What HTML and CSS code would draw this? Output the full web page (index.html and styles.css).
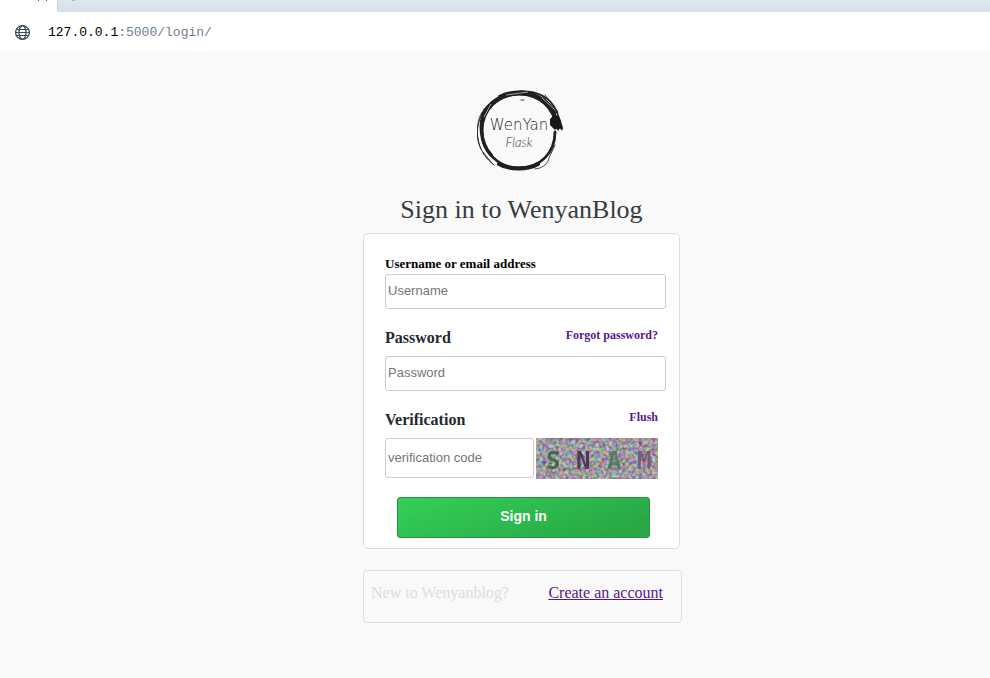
FILE: index.html
```html
<!DOCTYPE html>
<html lang="en">
<head>
<meta charset="utf-8">
<title>Sign in to WenyanBlog</title>
<link rel="stylesheet" href="styles.css">
</head>
<body>
<header class="browser">
  <div class="tabs">
    <div class="tab">
      <svg class="tab-marks" viewBox="0 0 57 12" aria-hidden="true"><path d="M38.500 0v1M46.500 0v1" stroke="#555"/></svg>
    </div>
    <div class="tab-rest">
      <svg class="tab-marks" viewBox="0 0 57 12" aria-hidden="true"><path d="M14 0h3" stroke="#78818c"/></svg>
    </div>
  </div>
  <div class="address">
    <svg class="globe" viewBox="0 0 16 16" aria-hidden="true">
      <g fill="none" stroke="#414b54" stroke-width="1.300">
        <circle cx="7.500" cy="7.500" r="6.900"/>
        <ellipse cx="7.500" cy="7.500" rx="3.500" ry="6.900"/>
        <path d="M1.500 4.500h12M0.500 7.500h14M1.500 10.500h12" stroke-width="1"/>
      </g>
    </svg>
    <span class="url">127.0.0.1<span class="url-path">:5000/login/</span></span>
  </div>
</header>
<main class="page">
  <div class="column">
    <svg class="logo" viewBox="478 90 88 82" role="img" aria-label="WenYan Flask">
      <g fill="none" stroke="#202020" stroke-linecap="round">
        <path d="M557 128C556 108 540 94 520 94C499 94 483 110 483 131C483 152 500 168 520 168C541 168 556 153 556 132" stroke-width="2.800"/>
        <path d="M484 116C489 103 505 93 520 93C533 92 547 99 555 113" stroke-width="4.500"/>
        <path d="M500 96C514 89 533 90 544 96C555 102 561 115 561 128" stroke-width="1.800"/>
        <path d="M486 110C480 123 481 143 492 155" stroke-width="3.500"/>
        <path d="M495 100C482 109 476 127 479 140C481 150 487 159 495 165" stroke-width="1"/>
        <path d="M483 112C477 121 477 139 482 149M484 152L493 163" stroke-width="0.800"/>
        <path d="M500 164C510 170 529 170 539 164" stroke-width="4"/>
        <path d="M536 169C545 168 549 163 550 158L556 145" stroke-width="0.800"/>
        <path d="M522 100h3M541 94l14 14M546 95l13 17" stroke-width="0.900"/>
      </g>
      <path d="M551 119L556 114L561 118L564 128L563 131L561 128L559 131L557 127L556 130L551 125Z" fill="#181818"/>
      <path d="M543 98L555 109M507 95L529 92M492 104L485 117" fill="none" stroke="#f9f9f9" stroke-width="0.600"/>
      <text class="logo-name" x="520" y="130" text-anchor="middle">WenYan</text>
      <text class="logo-sub" x="520" y="147" text-anchor="middle">Flask</text>
    </svg>
    <h1>Sign in to WenyanBlog</h1>
    <form class="card">
      <label class="small-label" for="username">Username or email address</label>
      <input class="field" id="username" type="text" placeholder="Username">
      <div class="row">
        <label for="password">Password</label>
        <a href="#forgot">Forgot password?</a>
      </div>
      <input class="field" id="password" type="password" placeholder="Password">
      <div class="row">
        <label for="code">Verification</label>
        <a href="#flush">Flush</a>
      </div>
      <div class="verify">
        <input class="field code" id="code" type="text" placeholder="verification code">
        <svg class="captcha" viewBox="0 0 122 41" role="img" aria-label="Verification picture">
          <defs>
            <filter id="noise" x="0" y="0" width="100%" height="100%" color-interpolation-filters="sRGB">
              <feTurbulence type="fractalNoise" baseFrequency="0.300" numOctaves="2" seed="8"/>
              <feColorMatrix values="0.950 0 0 0 0.140  0 0.950 0 0 0.120  0 0 0.950 0 0.150  0 0 0 0 1"/>
              <feGaussianBlur stdDeviation="0.600" edgeMode="duplicate"/>
            </filter>
          </defs>
          <rect width="122" height="41" fill="#999" filter="url(#noise)"/>
          <g class="captcha-text">
            <text x="10" y="31" fill="#2c6638">S</text>
            <text x="40" y="31" fill="#3c2447">N</text>
            <text x="71" y="31" fill="#3d7552">A</text>
            <text x="101" y="31" fill="#754c71">M</text>
          </g>
        </svg>
      </div>
      <button type="submit">Sign in</button>
    </form>
    <div class="signup">
      <span>New to Wenyanblog?</span>
      <a href="#create">Create an account</a>
    </div>
  </div>
</main>
</body>
</html>
```
FILE: styles.css
```css
* { box-sizing: border-box; }
body {
  margin: 0;
  background: #f9f9f9;
  color: #24292e;
  font-family: "Liberation Serif", serif;
  font-size: 16px;
}
.browser { background: #fff; }
.tabs { display: flex; height: 12px; }
.tab { width: 57px; }
.tab-rest {
  flex: 1;
  background: linear-gradient(#dfe6ee, #d9e0e9);
  border-left: 1px solid #ccd4de;
  border-bottom-left-radius: 2px;
}
.tab-marks { display: block; width: 57px; height: 12px; }
.address {
  display: flex;
  align-items: center;
  gap: 17px;
  height: 39px;
  padding: 2px 15px 0;
}
.globe { width: 16px; height: 16px; }
.url {
  color: #000;
  font: 13px/18px "Liberation Mono", monospace;
}
.url-path { color: #708090; }
.page { padding: 39px 0 40px 55px; }
.column { width: 100%; max-width: 319px; margin: 0 auto; }
.logo { display: block; width: 88px; height: 82px; margin: 0 0 0 114px; }
.logo-name { font: 200 15px "DejaVu Sans", sans-serif; fill: #282828; }
.logo-sub { font: italic 300 13px Lato, sans-serif; fill: #4a3c3e; }
h1 {
  margin: 22px 0 8px;
  padding-right: 2px;
  color: #363c42;
  font-size: 26px;
  font-weight: 400;
  line-height: 31px;
  text-align: center;
}
.card {
  margin-right: 2px;
  padding: 22px 13px 10px 21px;
  background: #fff;
  border: 1px solid #d8dee2;
  border-radius: 5px;
}
.small-label {
  display: block;
  height: 18px;
  color: #000;
  font-size: 13px;
  font-weight: 700;
  line-height: 16px;
}
.field {
  display: block;
  width: 100%;
  height: 35px;
  padding: 0 2px 2px;
  background: #fff;
  border: 1px solid #ccc;
  border-radius: 3px;
  font: 13px "Liberation Sans", sans-serif;
}
.field::placeholder { color: #757575; }
.row {
  display: flex;
  justify-content: space-between;
  height: 47px;
  padding: 18px 8px 0 0;
  font-weight: 700;
}
.row label { line-height: 22px; }
.row a {
  color: #551a8b;
  font-size: 12px;
  line-height: 16px;
  text-decoration: none;
}
.verify { display: flex; gap: 2px; padding-right: 8px; }
.code { flex: 1; min-width: 0; height: 40px; }
.captcha { display: block; width: 122px; height: 41px; }
.captcha-text { font: 600 24px "DejaVu Sans Mono", monospace; opacity: 0.8; }
button {
  display: block;
  width: calc(100% - 28px);
  height: 41px;
  margin: 18px 0 0 12px;
  padding: 0 0 3px;
  color: #fff;
  background: linear-gradient(160deg, #34d058, #28a745 90%);
  border: 1px solid #24943e;
  border-radius: 3px;
  font: bold 14px "Liberation Sans", sans-serif;
}
.signup {
  display: flex;
  justify-content: space-between;
  height: 53px;
  margin-top: 21px;
  padding: 12px 18px 0 7px;
  color: #d8dee2;
  border: 1px solid #d8dee2;
  border-radius: 4px;
  line-height: 20px;
}
.signup a { color: #551a8b; }
```
